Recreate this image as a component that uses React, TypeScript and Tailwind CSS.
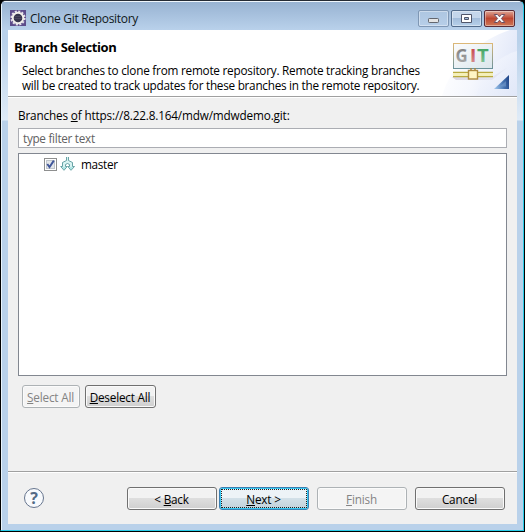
import React from "react";

const uiFont = "font-['Open_Sans','Noto_Sans',sans-serif]";
const hotkeyLine = "underline decoration-1 underline-offset-[1px] [text-decoration-skip-ink:none]";

function EclipseIcon() {
  return (
    <svg width="16" height="16" viewBox="0 0 16 16" className="mt-1 shrink-0">
      <rect width="16" height="16" fill="#5d4c8a" />
      <circle cx="8" cy="8" r="6.7" fill="none" stroke="#e4e0ea" strokeWidth="1.8" strokeDasharray="2.1 1.41" />
      <circle cx="8" cy="8" r="6.2" fill="#f2efea" />
      <circle cx="8" cy="8" r="4.3" fill="#37344c" />
      <path d="M4.8 6.5h6.4M4.4 8.5h7.2" stroke="#514d63" strokeWidth="0.8" />
    </svg>
  );
}

function GitBanner() {
  return (
    <svg width="75" height="66" viewBox="0 0 75 66" className="shrink-0">
      <defs>
        <linearGradient id="wash" x1="0" y1="0.3" x2="1" y2="0.6">
          <stop offset="0" stopColor="#ffffff" />
          <stop offset="0.5" stopColor="#f5f7fd" />
          <stop offset="1" stopColor="#dfe6f8" />
        </linearGradient>
        <linearGradient id="wash2" x1="0" y1="0" x2="1" y2="1">
          <stop offset="0" stopColor="#fafbff" />
          <stop offset="1" stopColor="#e1e8f8" />
        </linearGradient>
        <linearGradient id="card" x1="0" y1="0" x2="1" y2="1">
          <stop offset="0" stopColor="#fbfcfd" />
          <stop offset="1" stopColor="#dbe6ec" />
        </linearGradient>
        <linearGradient id="frame" x1="0" y1="0" x2="0" y2="1">
          <stop offset="0" stopColor="#dcb878" />
          <stop offset="1" stopColor="#6b929b" />
        </linearGradient>
        <linearGradient id="corner" x1="0" y1="0.6" x2="1" y2="0.4">
          <stop offset="0" stopColor="#9ec4ea" />
          <stop offset="0.6" stopColor="#4573b2" />
          <stop offset="1" stopColor="#24498b" />
        </linearGradient>
        <linearGradient id="gray" x1="0" y1="0" x2="0" y2="1">
          <stop offset="0" stopColor="#747474" />
          <stop offset="1" stopColor="#b4b4b4" />
        </linearGradient>
        <linearGradient id="red" x1="0" y1="0" x2="0" y2="1">
          <stop offset="0" stopColor="#c7343b" />
          <stop offset="1" stopColor="#d8a0a0" />
        </linearGradient>
        <linearGradient id="green" x1="0" y1="0" x2="0" y2="1">
          <stop offset="0" stopColor="#2b9a51" />
          <stop offset="1" stopColor="#98ccaa" />
        </linearGradient>
        <linearGradient id="shadow" x1="0" y1="0" x2="1" y2="0">
          <stop offset="0" stopColor="#c4bccf" stopOpacity="0.6" />
          <stop offset="1" stopColor="#c4bccf" stopOpacity="0.1" />
        </linearGradient>
      </defs>
      <path d="M75 0H68C38 10 10 32 0 66H75Z" fill="url(#wash)" />
      <path d="M75 21C56 26 40 42 34 66H75Z" fill="url(#wash2)" opacity="0.8" />
      <path d="M10 47H50L66 37L50 50H14Z" fill="url(#shadow)" />
      <rect x="11.5" y="13.5" width="39" height="25" fill="url(#card)" stroke="url(#frame)" />
      <g className="font-['Open_Sans'] text-[17px] font-bold">
        <text x="13.5" y="32" fill="url(#gray)" textLength="12" lengthAdjust="spacingAndGlyphs">G</text>
        <text x="27.8" y="32" fill="url(#red)" textLength="6.5" lengthAdjust="spacingAndGlyphs">I</text>
        <text x="35" y="32" fill="url(#green)" textLength="11.5" lengthAdjust="spacingAndGlyphs">T</text>
      </g>
      <path d="M11 42.5H51M11 46.5H51" stroke="#b9aa3e" strokeWidth="1.4" />
      <path d="M11 44.5H51" stroke="#f6f1b6" strokeWidth="2.6" />
      <path d="M29 38V41M33 38V41" stroke="#a7843d" strokeWidth="1.4" />
      <rect x="26.5" y="40.5" width="9" height="8.5" fill="#fff5c4" stroke="#b08c40" strokeWidth="1.4" />
      <path d="M67 45V59H52Z" fill="url(#corner)" />
      <path d="M58 56.5L64 51V56.5Z" fill="#7ea4d2" opacity="0.5" />
    </svg>
  );
}

const capBase = "h-[17px] rounded-[2px] border shadow-[inset_0_0_0_1px_rgba(255,255,255,0.38)] grid place-items-center";

function TitleBar() {
  return (
    <header className="flex h-[28px] shrink-0 items-center bg-linear-to-b from-[#98b3d2] to-[#b9d1eb] pr-2 pl-2">
      <EclipseIcon />
      <span className="mt-[6px] ml-1 text-[12px] whitespace-nowrap tracking-[-0.3px] text-[#101820]">Clone Git Repository</span>
      <div className="ml-auto flex gap-[2px] pt-[5px]">
        <div className={`${capBase} w-[31px] border-[#7f97b4] bg-linear-to-b from-[#adc6e1] to-[#b7cee8]`}>
          <svg width="13" height="7" viewBox="0 0 13 7" className="mt-[4px]"><rect x="1.5" y="1.5" width="10" height="4" rx=".8" fill="#e4e4e4" stroke="#62666e" strokeWidth="1" /></svg>
        </div>
        <div className={`${capBase} w-[31px] border-[#526b8b] bg-linear-to-b from-[#c4d6eb] from-45% via-[#a3bddb] via-50% to-[#b7d0ea]`}>
          <svg width="13" height="11" viewBox="0 0 13 11"><path fillRule="evenodd" d="M1.5 1.5h10v8h-10zM4.5 4.5v2h4v-2z" fill="#fff" stroke="#50566b" strokeWidth="1" /></svg>
        </div>
        <div className={`${capBase} w-[31px] border-[#592b36] bg-linear-to-b from-[#dda596] from-0% via-[#bd4630] via-50% to-[#cf7858]`}>
          <svg width="13" height="11" viewBox="0 0 13 11"><path d="M1.2 1.5h3.2l2.1 2.3 2.1-2.3h3.2L8.4 5.5l3.4 4H8.6L6.5 7.2 4.4 9.5H1.2l3.4-4z" fill="#fff" stroke="#6b5064" strokeWidth="1" /></svg>
        </div>
      </div>
    </header>
  );
}

function BranchRow() {
  return (
    <div className="flex h-[19px] items-center pl-[25px]">
      <svg width="13" height="13" viewBox="0 0 13 13">
        <rect x=".5" y=".5" width="12" height="12" fill="#fff" stroke="#8e8f8f" />
        <rect x="2.5" y="2.5" width="8" height="8" fill="#e3e6e9" stroke="#c0c5cb" />
        <path d="M3.3 6L5.5 9L9.8 2.6" fill="none" stroke="#40569a" strokeWidth="1.9" />
      </svg>
      <svg width="16" height="15" viewBox="0 0 16 15" className="ml-[3px]">
        <path d="M6.5 0V3.5L2.5 5.5V9.5H.7L4 13.3L7.2 9.5H5.5V7.5L7.5 6.5L9.5 7.5V9.5H7.8L11 13.3L14.5 9.5H12.5V5.5L8.5 3.5V0" fill="#d8f3f2" stroke="#5a989c" strokeWidth="0.9" />
        <path d="M2 10.2H6L4 12.4ZM9.2 10.2H13L11 12.4Z" fill="#a5e4e3" />
      </svg>
      <span className="ml-[5px] tracking-[-0.3px]">master</span>
    </div>
  );
}

function PushButton({ label, hotkey, before = "", kind = "normal", className = "" }: {
  label: string; hotkey?: string; before?: string; kind?: "normal" | "disabled" | "default"; className?: string;
}) {
  const look = kind === "disabled"
    ? "border-[#adb2b5] bg-[#f4f4f4] text-[#838383] shadow-[inset_0_0_0_1px_#fbfbfb]"
    : kind === "default"
      ? "border-[#3c7fb1] bg-linear-to-b from-[#edf3f7] from-48% via-[#d2e0e8] via-50% to-[#c2d1da] shadow-[inset_0_0_0_1px_#38c9f2]"
      : "border-[#707070] bg-linear-to-b from-[#f2f2f2] from-48% via-[#dedede] via-50% to-[#cfcfcf] shadow-[inset_0_0_0_1px_#fafafa]";
  return (
    <button className={`relative flex h-[23px] items-center justify-center rounded-[3px] border pr-px leading-[20px] whitespace-nowrap ${look} ${className}`}>
      {kind === "default" && <span className="absolute inset-[1px] border border-dotted border-[#202020]" />}
      <span className="whitespace-pre">{before}{hotkey && <span className={hotkeyLine}>{hotkey}</span>}{label}</span>
    </button>
  );
}

export default function App() {
  return (
    <div className={`h-[532px] w-[525px] overflow-hidden bg-black ${uiFont} text-[11.75px] tracking-[-0.2px] text-black`}>
      <div className="flex h-[531px] w-[524px] flex-col overflow-hidden rounded-t-[6px] border border-t-[#242a34] border-r-[#28cce8] border-b-[#28cce8] border-l-black bg-linear-to-b from-[#b9d1ea] from-[40px] via-[#dfebf7] via-[119px] to-[#b9d1ea] to-[120px]">
        <div className="h-px shrink-0 bg-[#eff6fc]" />
        <div className="flex min-h-0 flex-1 flex-col border-l border-[#e9f4fc]">
          <TitleBar />
          <main className="mr-[6px] mb-[6px] ml-[6px] flex min-h-0 flex-1 flex-col bg-[#f0f0f0]">
            <section className="flex h-[66px] shrink-0 justify-between bg-white">
              <div className="pl-[6px]">
                <h1 className="mt-[7px] text-[13px] leading-[20px] font-bold tracking-[-0.42px]">Branch Selection</h1>
                <p className="mt-[6px] ml-2 leading-[15px] whitespace-nowrap">
                  <span className="block tracking-[-0.23px]">Select branches to clone from remote repository. Remote tracking branches</span>
                  <span className="block tracking-[-0.26px]">will be created to track updates for these branches in the remote repository.</span>
                </p>
              </div>
              <div className="-ml-4"><GitBanner /></div>
            </section>
            <div className="h-[2px] shrink-0 border-t border-[#a0a0a0] bg-white" />
            <section className="flex flex-1 flex-col px-[10px]">
              <label className="mt-[9px] h-[16px] leading-[16px] tracking-[-0.16px] whitespace-nowrap">Branches <span className={hotkeyLine}>o</span>f https://8.22.8.164/mdw/mdwdemo.git:</label>
              <div className="mt-[5px] flex h-[20px] shrink-0 items-center border border-[#abadb3] bg-white pt-px pl-1 tracking-[-0.3px] text-[#626262]">type filter text</div>
              <div className="mt-[5px] h-[223px] shrink-0 border border-[#828790] bg-white pt-[1px]"><BranchRow /></div>
              <div className="mt-[9px] ml-1 flex gap-[5px]">
                <PushButton hotkey="S" label="elect All" kind="disabled" className="w-[58px]" />
                <PushButton hotkey="D" label="eselect All" className="w-[71px]" />
              </div>
            </section>
            <footer className="flex h-[53px] shrink-0 items-start border-t border-[#a0a0a0] pt-[15px] pl-[15px] shadow-[inset_0_1px_0_#fff]">
              <svg width="22" height="22" viewBox="0 0 22 22">
                <circle cx="11" cy="11" r="9.5" fill="#f8fafd" stroke="#66758e" />
                <text x="11" y="17" textAnchor="middle" className="font-['Open_Sans'] text-[16px] font-bold" fill="#536a86">?</text>
              </svg>
              <PushButton before="< " hotkey="B" label="ack" className="ml-[82px] w-[90px]" />
              <PushButton hotkey="N" label="ext >" kind="default" className="ml-[2px] w-[90px]" />
              <PushButton hotkey="F" label="inish" kind="disabled" className="ml-2 w-[90px]" />
              <PushButton label="Cancel" className="ml-2 w-[90px]" />
            </footer>
          </main>
        </div>
      </div>
    </div>
  );
}
